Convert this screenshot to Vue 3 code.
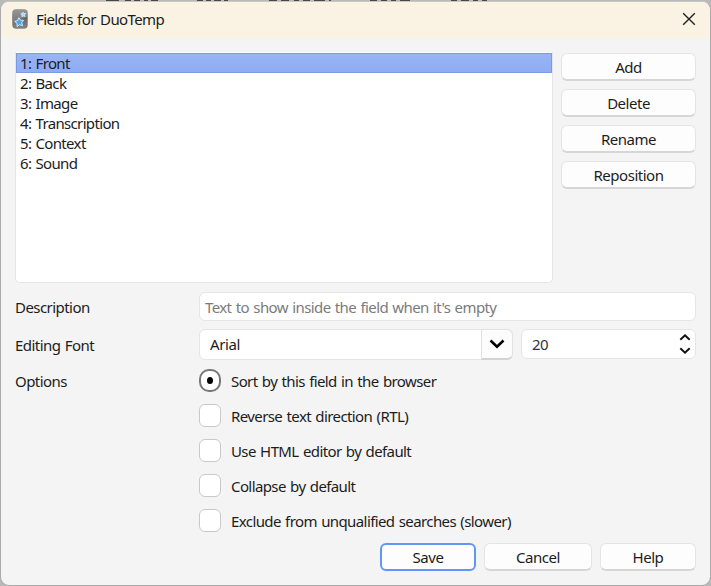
<script setup>
import { ref } from 'vue'

const fields = ['Front', 'Back', 'Image', 'Transcription', 'Context', 'Sound']
const selected = ref(0)
const actions = ['Add', 'Delete', 'Rename', 'Reposition']
const options = [
  'Reverse text direction (RTL)',
  'Use HTML editor by default',
  'Collapse by default',
  'Exclude from unqualified searches (slower)',
]
</script>

<template>
  <div class="desktop">
    <svg class="behind" width="711" height="3" viewBox="0 0 711 3">
      <path d="M106 .5h13m6 0h6m3 0h6m4 0h4m3 0h7M197 .5h6m3 0h5m3 0h7m3 0h4M269 .5h8m4 0h8m5 0h5m4 0h7m4 0h11m4 0h2M370 .5h7m4 0h6m4 0h5m4 0h10M451 .5h6m4 0h8m4 0h5m4 0h5" stroke="#4a4548" stroke-width="1.4" />
    </svg>
    <section class="window">
      <header class="titlebar">
        <svg class="logo" width="16" height="20" viewBox="0 0 16 20">
          <defs>
            <linearGradient id="g" x1="0" y1="0" x2="0" y2="1">
              <stop offset="0" stop-color="#8c8c8c" />
              <stop offset=".45" stop-color="#666" />
              <stop offset="1" stop-color="#858585" />
            </linearGradient>
          </defs>
          <rect x=".3" y=".3" width="15.4" height="19.4" rx="3.8" fill="url(#g)" />
          <path d="M1 12C5 12 9 9 15 8V4Q15 1 12 1H4Q1 1 1 4Z" fill="#aaa" opacity=".4" />
          <path d="M6.900 8.700l1.600 2.500 3 .1-1.800 2.500.8 2.900-2.900-1-2.500 1.800v-3.100L2.700 12.500l3-.9Z" fill="#45a5ee" stroke="#d3ecfb" stroke-width="1" stroke-linejoin="round" />
          <path d="M11 3.200l.9 1.300 1.700.1-1.100 1.300.4 1.600-1.500-.6-1.500.8.100-1.600-1.200-1.200 1.700-.4Z" fill="#a9daf8" stroke="#c9e7fa" stroke-width="1" stroke-linejoin="round" />
        </svg>
        <h1>Fields for DuoTemp</h1>
        <svg class="close" width="14" height="14" viewBox="0 0 14 14"><path d="M1.200 1.200L12.800 12.800M12.800 1.200L1.200 12.800" stroke="#222" stroke-width="1.400" /></svg>
      </header>

      <main class="content">
        <div class="top">
          <ul class="list">
            <li v-for="(f, i) in fields" :key="f" :class="{ active: i === selected }" @click="selected = i">{{ i + 1 }}: {{ f }}</li>
          </ul>
          <div class="actions">
            <button v-for="a in actions" :key="a" class="btn">{{ a }}</button>
          </div>
        </div>

        <div class="row desc">
          <span class="label">Description</span>
          <div class="box input">Text to show inside the field when it's empty</div>
        </div>
        <div class="row font">
          <span class="label">Editing Font</span>
          <div class="box combo">
            <span class="value">Arial</span>
            <span class="arrow">
              <svg width="16" height="10" viewBox="0 0 16 10"><path d="M1.500 1.500L8 7.700L14.500 1.500" fill="none" stroke="#000" stroke-width="2.600" /></svg>
            </span>
          </div>
          <div class="box spin">
            <span class="size">20</span>
            <svg width="12" height="20" viewBox="0 0 12 20"><path d="M1.300 5.800L6 1.300L10.700 5.800M1.300 14.200L6 18.700L10.700 14.200" fill="none" stroke="#111" stroke-width="1.900" /></svg>
          </div>
        </div>
        <div class="row opts">
          <span class="label">Options</span>
          <div class="options">
            <label class="option"><span class="mark radio"></span><span>Sort by this field in the browser</span></label>
            <label v-for="o in options" :key="o" class="option"><span class="mark"></span><span>{{ o }}</span></label>
          </div>
        </div>
        <footer class="footer">
          <button class="btn save">Save</button>
          <button class="btn cancel">Cancel</button>
          <button class="btn help">Help</button>
        </footer>
      </main>
    </section>
  </div>
</template>

<style>
body { margin: 0; overflow: hidden; }
</style>

<style scoped>
* { box-sizing: border-box; }
.desktop {
  position: relative;
  width: 711px;
  height: 586px;
  padding: 1px 0 0;
  background: #b9b9b9;
  font-family: "Noto Sans", "Open Sans", sans-serif;
  font-size: 15px;
  letter-spacing: -0.6px;
  word-spacing: 1px;
  color: #1c1c1c;
}
.behind { position: absolute; left: 0; top: 0; }
.window {
  position: relative;
  height: 585px;
  border: 1px solid #aaa;
  border-top-color: #cbc8c0;
  border-radius: 9px;
  background: #f4f4f4;
  overflow: hidden;
}
.titlebar {
  height: 36px;
  padding: 0 14px 2px 11px;
  display: flex;
  align-items: center;
  background: #faf3e3;
}
h1 { flex: 1; margin: 0 0 0 8px; font-size: 15px; font-weight: 400; line-height: 20px; }
.content { padding: 14px 14px 0; }
.top { display: flex; justify-content: space-between; }
.list {
  width: 538px;
  height: 231px;
  margin: 0;
  padding: 1px 0 0;
  list-style: none;
  background: #fff;
  border: 1px solid #e6e6e6;
  border-top: 0;
  border-radius: 0 0 5px 5px;
}
.list li { height: 20px; line-height: 20px; padding-left: 4px; letter-spacing: -0.66px; }
.list .active { background: linear-gradient(#9ab5f5, #8eabf4); box-shadow: inset 0 0 0 1px #7c9ae4; }
.actions { width: 135px; padding-top: 1px; display: flex; flex-direction: column; gap: 8px; }
.btn {
  height: 28px;
  margin: 0;
  padding: 1px 0 0;
  font: inherit;
  letter-spacing: -0.48px;
  line-height: 25px;
  color: inherit;
  background: #fdfdfd;
  border: 1px solid #e4e4e4;
  border-bottom: 2px solid #d6d6d6;
  border-radius: 6px;
}
.row { display: flex; }
.label { width: 184px; line-height: 20px; letter-spacing: -0.55px; }
.box { background: #fff; border: 1px solid #e5e5e5; border-radius: 6px; }
.desc { margin-top: 9px; align-items: center; height: 29px; }
.desc .label { padding-top: 1px; }
.input { flex: 1; height: 29px; line-height: 28px; padding-left: 5px; color: #7b7b7b; }
.font { margin-top: 8px; height: 31px; align-items: flex-start; }
.font .label { padding-top: 6px; }
.combo { width: 314px; height: 31px; display: flex; justify-content: space-between; }
.value { padding-left: 10px; line-height: 28px; letter-spacing: -0.4px; }
.arrow {
  width: 32px;
  margin: -1px;
  display: flex;
  align-items: center;
  justify-content: center;
  background: #fcfcfc;
  border: 1px solid #e2e2e2;
  border-bottom: 2px solid #d2d2d2;
  border-radius: 0 6px 6px 0;
}
.spin { width: 175px; height: 30px; margin-left: 8px; padding: 0 4px 0 10px; display: flex; align-items: center; justify-content: space-between; color: #333; }
.size { line-height: 20px; padding-bottom: 1px; }
.opts { margin-top: 10px; }
.opts .label { padding-top: 1px; }
.options { display: flex; flex-direction: column; gap: 13px; }
.option { display: flex; align-items: flex-start; gap: 10px; height: 22px; line-height: 20px; }
.option span:last-child { padding-top: 1px; }
.mark { width: 22px; height: 23px; margin-top: -1px; background: #fff; border: 1.5px solid #c9c9c9; border-radius: 6px; }
.radio { display: flex; align-items: center; justify-content: center; border: 2px solid #777; border-radius: 10px; }
.radio::after { content: ""; width: 6px; height: 7px; border-radius: 50%; background: #000; }
.footer { margin-top: 11px; display: flex; justify-content: flex-end; gap: 8px; }
.save { width: 96px; padding-top: 0; line-height: 24px; border: 2px solid #6097f7; }
.cancel { width: 108px; }
.help { width: 96px; }
</style>
